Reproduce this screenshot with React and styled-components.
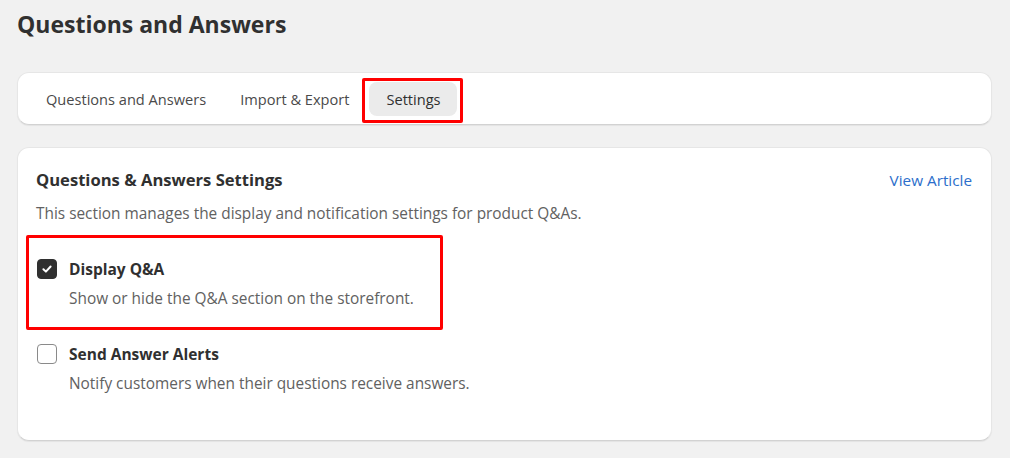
import React from 'react';
import styled, { createGlobalStyle } from 'styled-components';

const GlobalStyle = createGlobalStyle`
    body {
        margin: 0;
        background: #f1f1f1;
        font-family: "Open Sans", "Noto Sans", sans-serif;
        color: #303030;
    }
`;

const tabs = ['Questions and Answers', 'Import & Export', 'Settings'];

const options = [
    {
        title: 'Display Q&A',
        help: 'Show or hide the Q&A section on the storefront.',
        checked: true,
        marked: true
    },
    {
        title: 'Send Answer Alerts',
        help: 'Notify customers when their questions receive answers.',
        checked: false,
        marked: false
    },
];

const Page = styled.div`
    padding: 8px 18px 18px 17px;
`;

const PageTitle = styled.h1`
    margin: 0 0 32px;
    font-size: 23px;
    line-height: 32px;
    font-weight: 700;
    color: #303030;
`;

const Card = styled.div`
    background: #ffffff;
    border-radius: 12px;
    border: 1px solid #e6e6e6;
    border-bottom-color: #d2d2d2;
    box-shadow: 0 1px 1px rgba(0, 0, 0, 0.06);
`;

const TabBar = styled(Card)`
    display: flex;
    align-items: center;
    gap: 6px;
    height: 51px;
    padding: 0 14px;
    margin-bottom: 22px;
`;

const Tab = styled.div`
    position: relative;
    display: flex;
    align-items: center;
    height: 34px;
    padding: ${p => (p.$active ? '0 16px 0 17px' : '0 14px')};
    border-radius: 8px;
    font-size: 14.6px;
    font-weight: 500;
    background: ${p => (p.$active ? '#ebebeb' : 'transparent')};
    color: ${p => (p.$active ? '#303030' : '#4a4a4a')};
    &::after {
        content: '';
        display: ${p => (p.$marked ? 'block' : 'none')};
        position: absolute;
        top: -4px;
        left: -7px;
        right: -6px;
        bottom: -7px;
        border: 3px solid #ff0000;
        border-radius: 2px;
    }
`;

const Panel = styled(Card)`
    padding: 20px 19px 46px 18px;
`;

const PanelHead = styled.div`
    display: flex;
    justify-content: space-between;
    align-items: center;
    margin-bottom: 12px;
`;

const PanelTitle = styled.h2`
    margin: 0;
    font-size: 16.6px;
    line-height: 24px;
    font-weight: 700;
`;

const Link = styled.a`
    font-size: 15.3px;
    color: #2c6ecb;
    text-decoration: none;
`;

const Text = styled.p`
    margin: 0;
    font-size: 15.4px;
    line-height: 20px;
    color: #616161;
`;

const OptionList = styled.div`
    display: flex;
    flex-direction: column;
    gap: 35px;
    padding: 35px 0 0 1px;
`;

const Option = styled.label`
    position: relative;
    display: grid;
    grid-template-columns: 20px 1fr;
    column-gap: 12px;
    row-gap: 10px;
    &::after {
        content: '';
        display: ${p => (p.$marked ? 'block' : 'none')};
        position: absolute;
        top: -24px;
        left: -11px;
        width: 417px;
        bottom: -21px;
        border: 3px solid #ff0000;
        border-radius: 2px;
        box-sizing: border-box;
    }
`;

const Box = styled.span`
    box-sizing: border-box;
    width: 20px;
    height: 20px;
    border-radius: 4px;
    display: flex;
    align-items: center;
    justify-content: center;
    background: ${p => (p.$checked ? '#303030' : '#ffffff')};
    border: 1px solid ${p => (p.$checked ? '#303030' : '#8a8a8a')};
`;

const OptionTitle = styled.span`
    font-size: 15.5px;
    line-height: 20px;
    font-weight: 700;
    color: #303030;
`;

const OptionHelp = styled(Text)`
    grid-column: 2;
`;

function App() {
    return (
        <Page>
            <GlobalStyle />
            <PageTitle>Questions and Answers</PageTitle>
            <TabBar>
                {tabs.map((t, k) => (
                    <Tab key={k} $active={k === 2} $marked={k === 2}>{t}</Tab>
                ))}
            </TabBar>
            <Panel>
                <PanelHead>
                    <PanelTitle>Questions &amp; Answers Settings</PanelTitle>
                    <Link href="#">View Article</Link>
                </PanelHead>
                <Text>This section manages the display and notification settings for product Q&amp;As.</Text>
                <OptionList>
                    {options.map((o, k) => (
                        <Option key={k} $marked={o.marked}>
                            <Box $checked={o.checked}>
                                {o.checked && (
                                    <svg width="12" height="12" viewBox="0 0 12 12">
                                        <path d="M2.4 6.2 L4.9 8.6 L9.6 3.5" fill="none" stroke="#fff" strokeWidth="2" strokeLinecap="round" strokeLinejoin="round" />
                                    </svg>
                                )}
                            </Box>
                            <OptionTitle>{o.title}</OptionTitle>
                            <OptionHelp>{o.help}</OptionHelp>
                        </Option>
                    ))}
                </OptionList>
            </Panel>
        </Page>
    );
}

export default App;
